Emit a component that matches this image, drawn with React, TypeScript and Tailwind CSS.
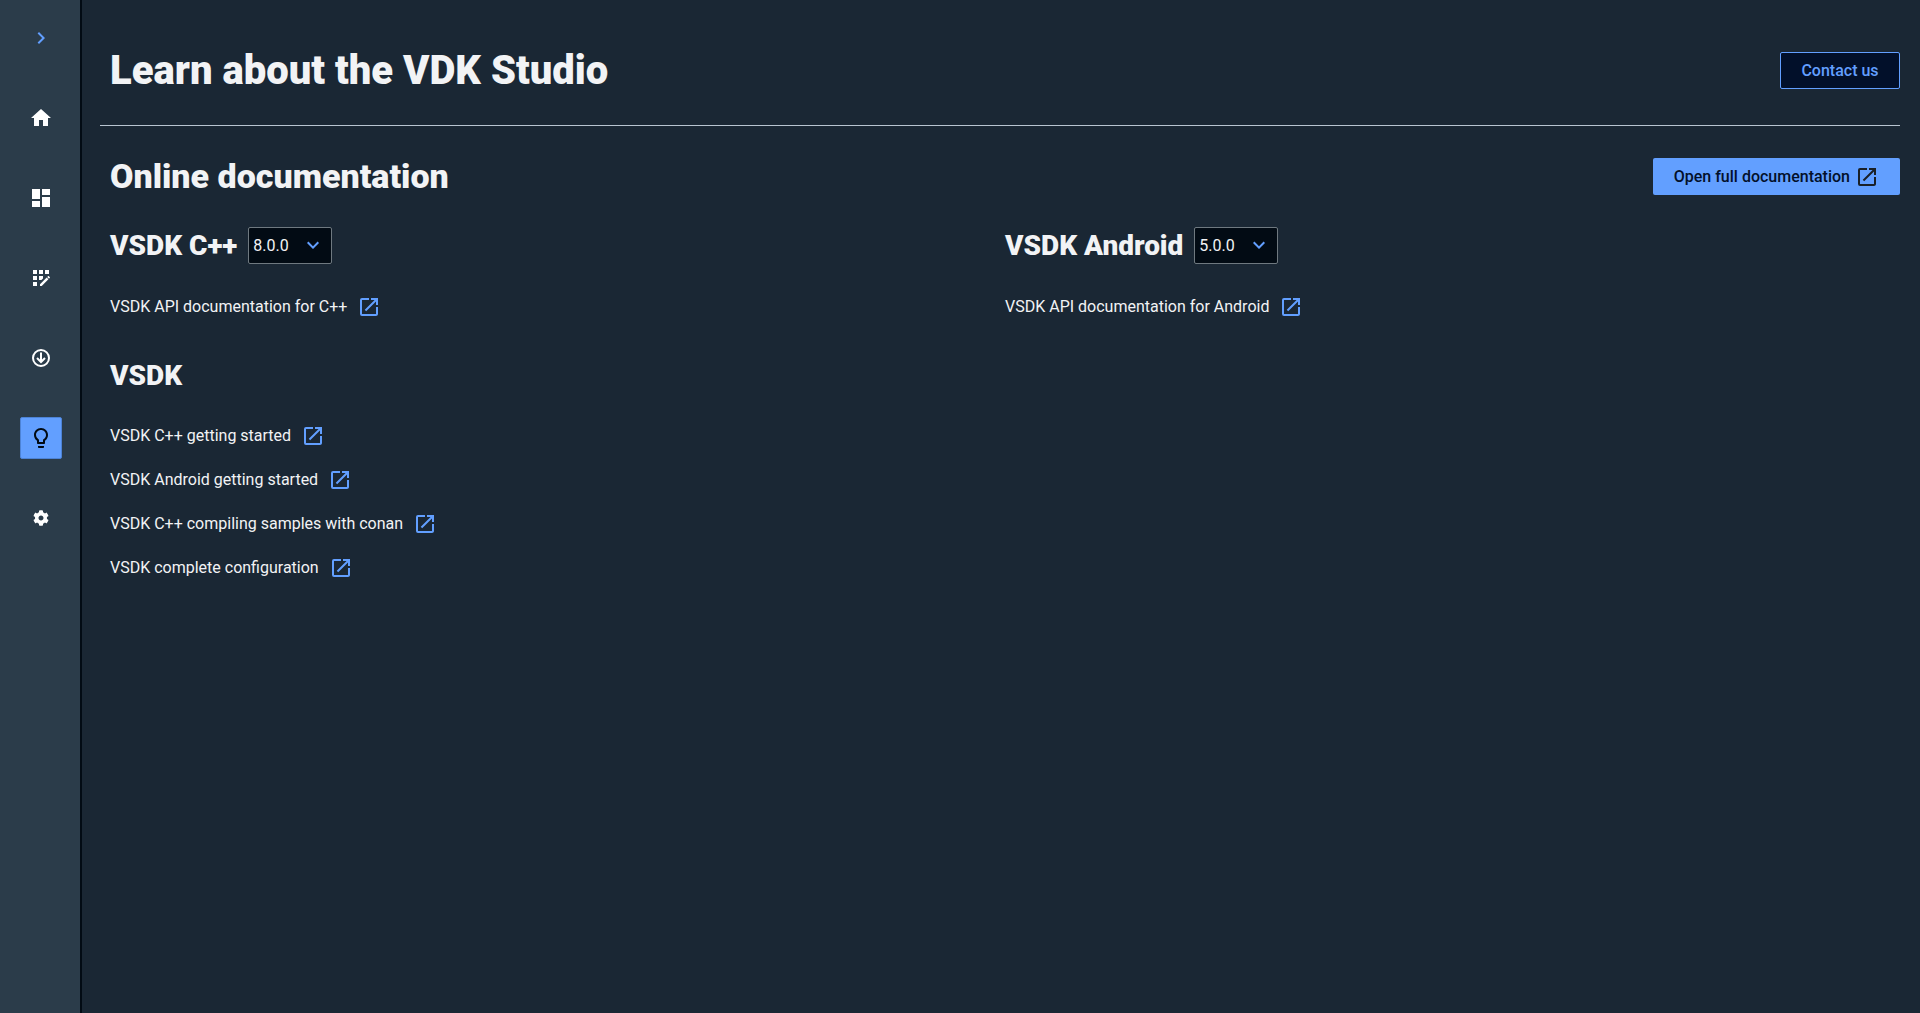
import { ReactNode } from "react";
import { FaCog } from "react-icons/fa";
import {
  MdAppRegistration,
  MdChevronRight,
  MdDashboard,
  MdExpandMore,
  MdHome,
  MdOpenInNew,
  MdOutlineLightbulb,
} from "react-icons/md";

type NavButtonType = {
  label: string;
  active?: boolean;
  children: ReactNode;
};

type VersionSelectType = {
  label: string;
  versions: string[];
};

const guides = [
  "VSDK C++ getting started",
  "VSDK Android getting started",
  "VSDK C++ compiling samples with conan",
  "VSDK complete configuration",
];

function NavButton({ label, active, children }: NavButtonType) {
  return (
    <button
      type="button"
      aria-label={label}
      className={
        active
          ? "flex size-[42px] items-center justify-center rounded-xs border border-[#4d83d6] bg-[#629fff] text-[#020b14]"
          : "flex size-[42px] items-center justify-center text-white"
      }
    >
      {children}
    </button>
  );
}

function DownloadIcon() {
  return (
    <svg
      width="24"
      height="24"
      viewBox="0 0 24 24"
      fill="none"
      stroke="currentColor"
      strokeWidth="2"
    >
      <circle cx="12" cy="12" r="8" />
      <path d="M12 6.5v9M8 12l4 4 4-4" />
    </svg>
  );
}

function VersionSelect({ label, versions }: VersionSelectType) {
  return (
    <div className="relative">
      <select
        aria-label={label}
        className="block h-[37px] w-[84px] appearance-none rounded-xs border border-[#6f7980] bg-[#020b14] pl-1 text-base text-[#f2f3f5]"
      >
        {versions.map((version) => (
          <option key={version}>{version}</option>
        ))}
      </select>
      <MdExpandMore
        size={24}
        className="pointer-events-none absolute top-1.5 right-[7px] text-[#629fff]"
      />
    </div>
  );
}

function DocLink({ children }: { children: ReactNode }) {
  return (
    <a href="#" className="flex w-fit items-center gap-2.5 text-base">
      {children}
      <MdOpenInNew size={24} className="text-[#629fff]" />
    </a>
  );
}

export default function App() {
  return (
    <div className="flex min-h-screen bg-[#1a2734] font-[Roboto,sans-serif] text-[#f2f3f5]">
      <nav className="flex w-[82px] shrink-0 flex-col items-center gap-[38px] bg-[#2b3c4a] pt-[17px] shadow-[inset_-2px_0_0_#020b14]">
        <NavButton label="Expand menu">
          <MdChevronRight size={24} className="text-[#629fff]" />
        </NavButton>
        <NavButton label="Home">
          <MdHome size={24} />
        </NavButton>
        <NavButton label="Dashboard">
          <MdDashboard size={24} />
        </NavButton>
        <NavButton label="Projects">
          <MdAppRegistration size={24} />
        </NavButton>
        <NavButton label="Downloads">
          <DownloadIcon />
        </NavButton>
        <NavButton label="Learn" active>
          <MdOutlineLightbulb size={24} />
        </NavButton>
        <NavButton label="Settings">
          <FaCog size={16} />
        </NavButton>
      </nav>

      <main className="flex-1 pr-5 pl-[18px]">
        <header className="flex items-center justify-between border-b border-[#b8c4d0] pt-9 pb-5 pl-[10px]">
          <h1 className="text-[40px] leading-[69px] font-black">
            Learn about the VDK Studio
          </h1>
          <button
            type="button"
            className="h-[37px] min-w-[120px] rounded-xs border border-[#629fff] bg-[#02102a] px-5 font-medium text-[#629fff]"
          >
            Contact us
          </button>
        </header>

        <div className="pt-8 pl-[10px]">
          <div className="flex items-center justify-between">
            <h2 className="text-[34px] leading-[37px] font-black">
              Online documentation
            </h2>
            <button
              type="button"
              className="flex h-[37px] items-center gap-[5px] rounded-xs bg-[#629fff] px-[21px] font-medium text-[#02102a]"
            >
              Open full documentation
              <MdOpenInNew size={24} className="text-[#1a2027]" />
            </button>
          </div>

          <div className="mt-8 grid grid-cols-2">
            <section>
              <div className="flex items-center gap-[11px]">
                <h3 className="text-[28px] leading-[37px] font-black">VSDK C++</h3>
                <VersionSelect label="VSDK C++ version" versions={["8.0.0", "7.0.0"]} />
              </div>
              <div className="mt-[31px]">
                <DocLink>VSDK API documentation for C++</DocLink>
              </div>
            </section>
            <section>
              <div className="flex items-center gap-[11px]">
                <h3 className="text-[28px] leading-[37px] font-black">VSDK Android</h3>
                <VersionSelect label="VSDK Android version" versions={["5.0.0", "4.0.0"]} />
              </div>
              <div className="mt-[31px]">
                <DocLink>VSDK API documentation for Android</DocLink>
              </div>
            </section>
          </div>

          <section className="mt-[38px]">
            <h3 className="text-[28px] leading-[37px] font-black">VSDK</h3>
            <ul className="mt-[30px] flex flex-col gap-5">
              {guides.map((guide) => (
                <li key={guide}>
                  <DocLink>{guide}</DocLink>
                </li>
              ))}
            </ul>
          </section>
        </div>
      </main>
    </div>
  );
}
